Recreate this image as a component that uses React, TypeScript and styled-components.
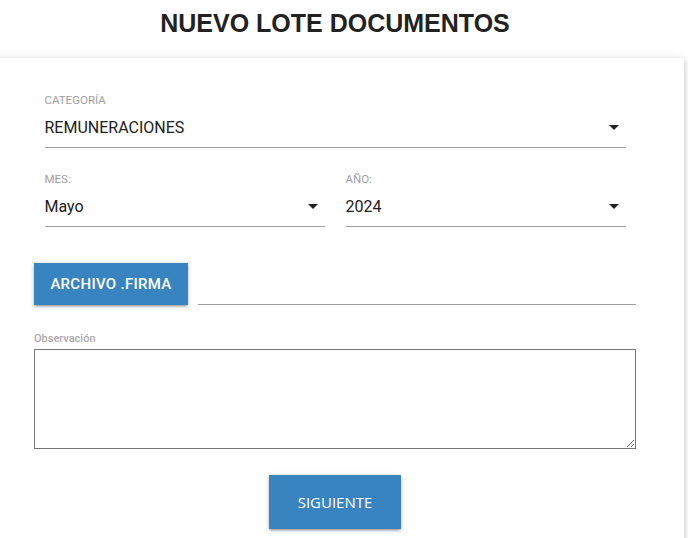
import React from "react";
import styled, { createGlobalStyle } from "styled-components";

const GlobalStyle = createGlobalStyle`
  html, body { margin: 0; padding: 0; background: #ffffff; overflow: hidden; }
  body { font-family: Roboto, "Liberation Sans", Arial, sans-serif; }
  * { box-sizing: border-box; }
`;

const Page = styled.div`
  width: 698px;
  margin-left: -14px;
`;

const Title = styled.h1`
  margin: 0;
  padding-top: 8px;
  height: 38px;
  line-height: 30px;
  text-align: center;
  font-family: "Liberation Sans", Arial, sans-serif;
  font-weight: 700;
  font-size: 25px;
  color: #222222;
`;

const Card = styled.div`
  margin-top: 20px;
  background: #ffffff;
  min-height: 520px;
  padding: 35px 48px 0;
  box-shadow: 0 2px 5px rgba(0, 0, 0, 0.16), 0 2px 10px rgba(0, 0, 0, 0.12);
`;

const Row = styled.div<{ $cols?: number; $gap?: number }>`
  display: grid;
  grid-template-columns: repeat(${(p) => p.$cols ?? 1}, 1fr);
  margin-bottom: ${(p) => p.$gap ?? 0}px;
`;

const Field = styled.div`
  padding: 0 10.5px;
  display: flex;
  flex-direction: column;
`;

const Label = styled.span`
  font-size: 11.5px;
  line-height: 14px;
  color: #9e9e9e;
`;

const SelectBox = styled.div`
  height: 41px;
  display: flex;
  align-items: center;
  justify-content: space-between;
  border-bottom: 1px solid #9e9e9e;
  font-size: 16px;
  color: #212121;
`;

const Caret = styled.svg`
  width: 24px;
  height: 24px;
  fill: #212121;
  margin-bottom: 1px;
`;

const FileRow = styled.div`
  display: flex;
  align-items: flex-end;
  gap: 10px;
  margin-bottom: 27px;
`;

const FileButton = styled.button`
  width: 154px;
  height: 42px;
  padding: 0;
  border: none;
  border-radius: 0;
  background: #3884c1;
  color: #ffffff;
  font-family: Roboto, "Liberation Sans", Arial, sans-serif;
  font-weight: 500;
  font-size: 15px;
  letter-spacing: 0.3px;
  text-transform: uppercase;
  box-shadow: 0 2px 2px rgba(0, 0, 0, 0.14), 0 3px 1px -2px rgba(0, 0, 0, 0.12),
    0 1px 5px rgba(0, 0, 0, 0.2);
  cursor: pointer;
`;

const PathInput = styled.div`
  flex: 1;
  height: 30px;
  border-bottom: 1px solid #9e9e9e;
`;

const NoteLabel = styled.label`
  display: block;
  font-size: 11px;
  line-height: 14px;
  font-weight: 500;
  color: #a8a8a8;
  margin-bottom: 3px;
`;

const NoteArea = styled.textarea`
  display: block;
  width: 100%;
  height: 100px;
  margin: 0;
  border: 1px solid #767676;
  border-radius: 0;
  resize: both;
  font-family: Roboto, sans-serif;
  font-size: 14px;
  outline: none;
`;

const Actions = styled.div`
  display: flex;
  justify-content: center;
  margin-top: 26px;
`;

const NextButton = styled.button`
  width: 132px;
  height: 54px;
  border: none;
  border-radius: 0;
  background: #3884c1;
  color: #ffffff;
  font-family: "Open Sans", "Noto Sans", sans-serif;
  font-size: 15px;
  font-weight: 400;
  box-shadow: 0 2px 2px rgba(0, 0, 0, 0.14), 0 3px 1px -2px rgba(0, 0, 0, 0.12),
    0 1px 5px rgba(0, 0, 0, 0.2);
  cursor: pointer;
`;

const CaretIcon = () => (
  <Caret viewBox="0 0 24 24">
    <path d="M7 10l5 5 5-5z" />
  </Caret>
);

const Select = ({ label, value }: { label: string; value: string }) => (
  <Field>
    <Label>{label}</Label>
    <SelectBox>
      <span>{value}</span>
      <CaretIcon />
    </SelectBox>
  </Field>
);

export default function App() {
  return (
    <>
      <GlobalStyle />
      <Page>
        <Title>NUEVO LOTE DOCUMENTOS</Title>
        <Card>
          <Row $gap={24}>
            <Select label="CATEGORÍA" value="REMUNERACIONES" />
          </Row>
          <Row $cols={2} $gap={36}>
            <Select label="MES:" value="Mayo" />
            <Select label="AÑO:" value="2024" />
          </Row>
          <FileRow>
            <FileButton>Archivo .firma</FileButton>
            <PathInput />
          </FileRow>
          <NoteLabel>Observación</NoteLabel>
          <NoteArea />
          <Actions>
            <NextButton>SIGUIENTE</NextButton>
          </Actions>
        </Card>
      </Page>
    </>
  );
}
